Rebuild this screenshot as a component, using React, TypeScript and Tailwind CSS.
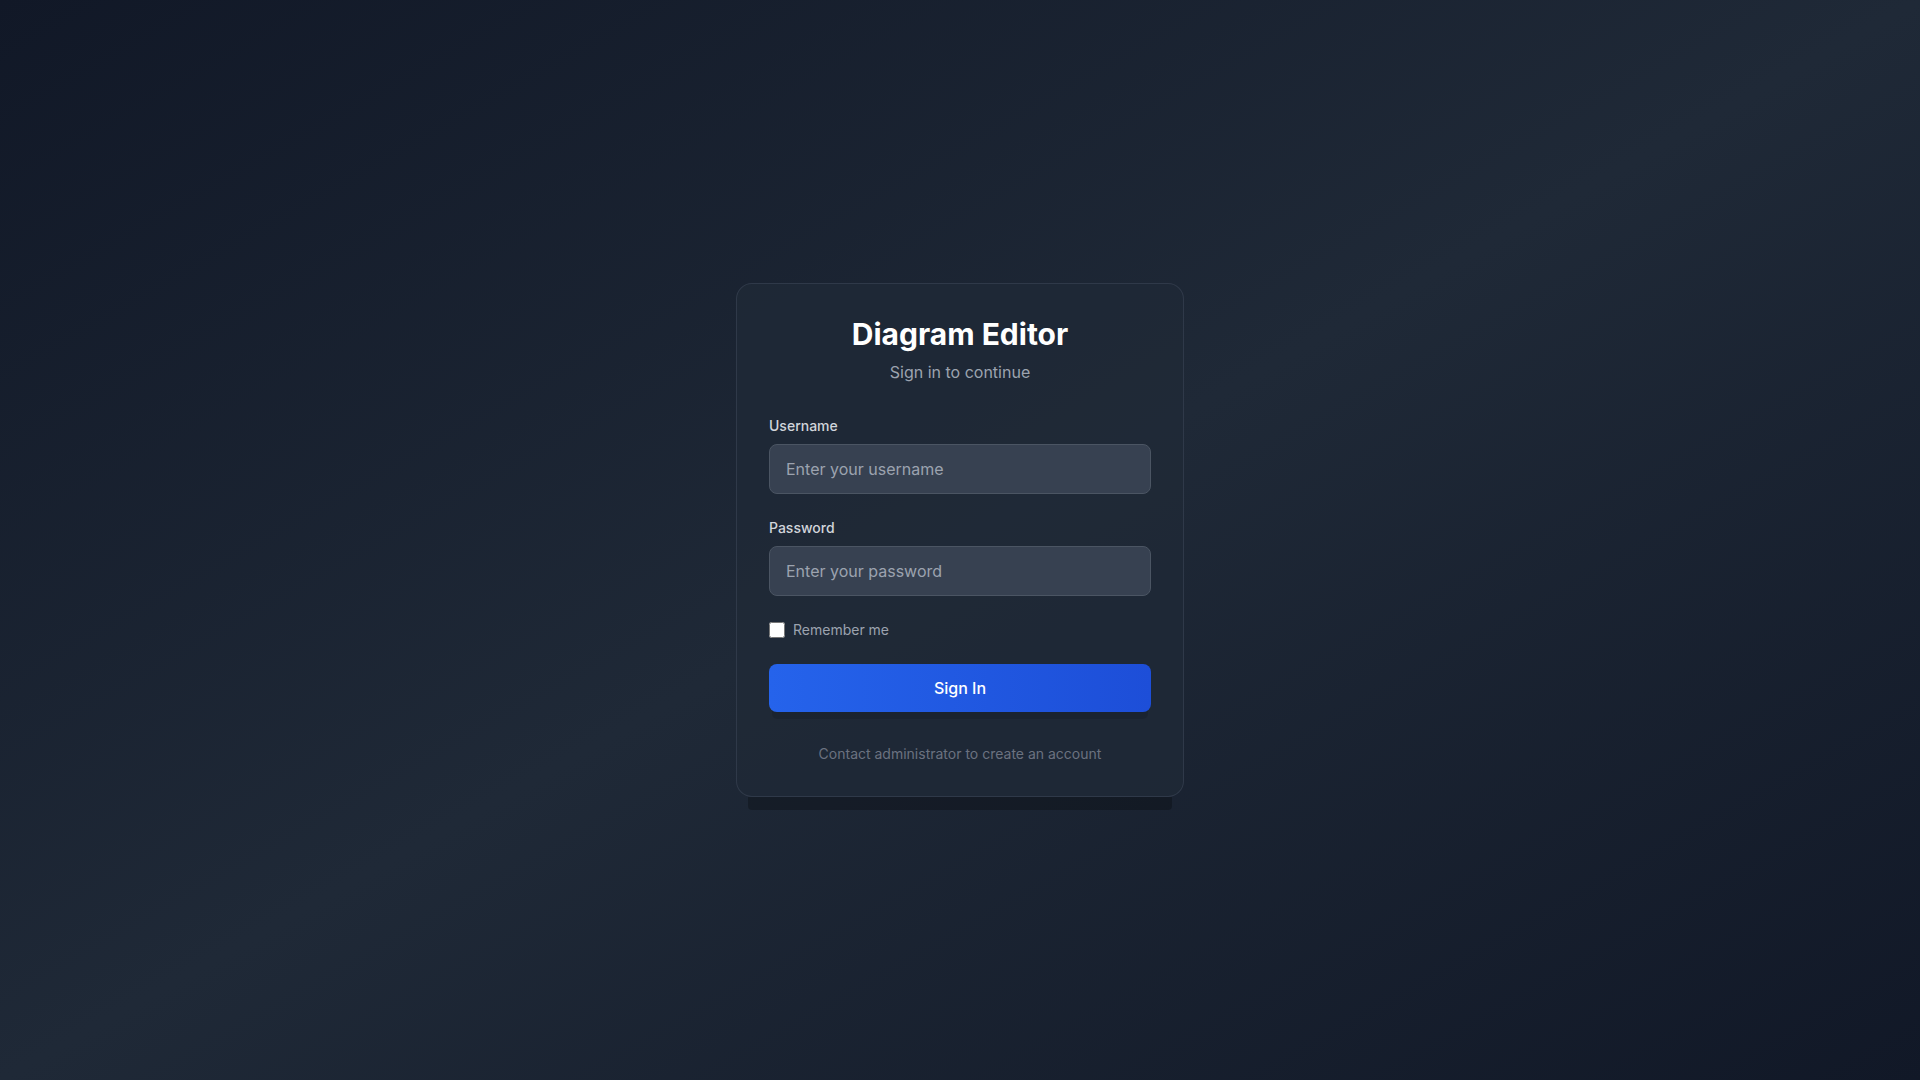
import { useState } from 'react';

export default function App() {
  const [username, setUsername] = useState('');
  const [password, setPassword] = useState('');
  const [remember, setRemember] = useState(false);

  return (
    <div className="flex min-h-screen items-center justify-center bg-gradient-to-br from-[#111827] via-[#1f2937] to-[#111827] font-['Inter','Noto_Sans',sans-serif]">
      <div className="w-full max-w-md rounded-2xl border border-[#374151]/70 bg-[#1f2937]/80 p-8 shadow-[0_25px_0_-12px_rgba(0,0,0,0.25)]">
        <div className="mb-8 text-center">
          <h1 className="text-3xl font-bold text-white">Diagram Editor</h1>
          <p className="mt-2 text-base text-[#9ca3af]">Sign in to continue</p>
        </div>

        <form className="space-y-6" onSubmit={(event) => event.preventDefault()}>
          <div>
            <label htmlFor="username" className="mb-2 block text-sm font-medium text-[#d1d5db]">
              Username
            </label>
            <input
              id="username"
              type="text"
              value={username}
              onChange={(event) => setUsername(event.target.value)}
              placeholder="Enter your username"
              className="w-full rounded-lg border border-[#4b5563] bg-[#374151] px-4 py-3 text-base text-white placeholder-[#9ca3af] outline-none"
            />
          </div>

          <div>
            <label htmlFor="password" className="mb-2 block text-sm font-medium text-[#d1d5db]">
              Password
            </label>
            <input
              id="password"
              type="password"
              value={password}
              onChange={(event) => setPassword(event.target.value)}
              placeholder="Enter your password"
              className="w-full rounded-lg border border-[#4b5563] bg-[#374151] px-4 py-3 text-base text-white placeholder-[#9ca3af] outline-none"
            />
          </div>

          <div className="flex items-center">
            <input
              id="remember"
              type="checkbox"
              checked={remember}
              onChange={(event) => setRemember(event.target.checked)}
              className="m-0 h-4 w-4 rounded border-[#4b5563]"
            />
            <label htmlFor="remember" className="ml-2 text-sm text-[#9ca3af]">
              Remember me
            </label>
          </div>

          <button
            type="submit"
            className="w-full rounded-lg bg-gradient-to-r from-[#2563eb] to-[#1d4ed8] py-3 text-base font-medium text-white shadow-[0_10px_0_-3px_rgba(0,0,0,0.1),0_4px_0_-4px_rgba(0,0,0,0.1)]"
          >
            Sign In
          </button>
        </form>

        <p className="mt-8 text-center text-sm text-[#6b7280]">Contact administrator to create an account</p>
      </div>
    </div>
  );
}
